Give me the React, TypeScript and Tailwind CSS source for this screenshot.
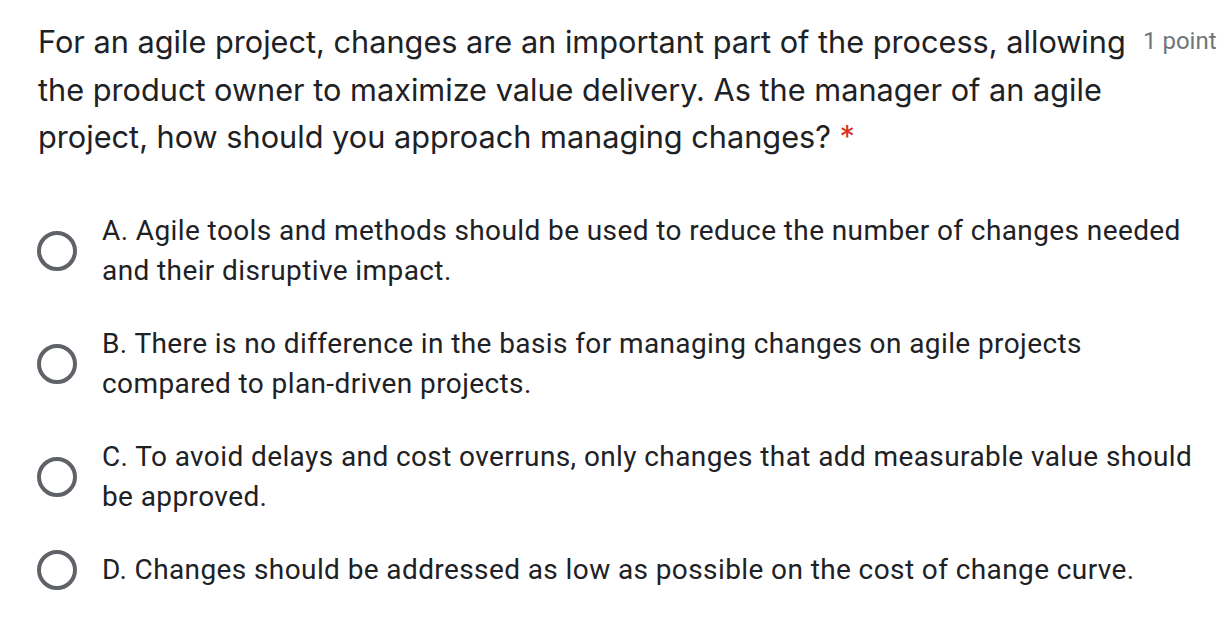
const options = [
  ["A. Agile tools and methods should be used to reduce the number of changes needed", "and their disruptive impact."],
  ["B. There is no difference in the basis for managing changes on agile projects", "compared to plan-driven projects."],
  ["C. To avoid delays and cost overruns, only changes that add measurable value should", "be approved."],
  ["D. Changes should be addressed as low as possible on the cost of change curve."],
];

function Radio() {
  return <div className="w-10 h-10 shrink-0 rounded-full border-[4.5px] border-[#5f6368]" />;
}

export default function App() {
  return (
    <div className="w-[1230px] h-[636px] bg-white pl-[38px] pt-[18px] font-['Roboto',sans-serif] text-[#202124]">
      {/* Question title */}
      <div className="flex items-start">
        <div className="w-[1100px] font-['Inter',sans-serif] text-[30.7px] leading-[47.5px]">
          <div className="whitespace-nowrap">
            For an agile project, changes are an important part of the process, allowing
          </div>
          <div className="whitespace-nowrap">
            the product owner to maximize value delivery. As the manager of an agile
          </div>
          <div className="whitespace-nowrap">
            project, how should you approach managing changes?{" "}
            <span className="text-[#d93025]">*</span>
          </div>
        </div>
        <span className="ml-[5px] text-[24px] leading-[47.5px] text-[#70757a] whitespace-nowrap">1 point</span>
      </div>

      {/* Options */}
      <div className="mt-[50px] flex flex-col gap-[33px]">
        {options.map((lines, i) => (
          <div key={i} className="flex items-center gap-[25px] -ml-[1px]">
            <Radio />
            <div className="text-[28px] leading-[40px] tracking-[0.4px]">
              {lines.map((l, j) => (
                <div key={j} className="whitespace-nowrap">{l}</div>
              ))}
            </div>
          </div>
        ))}
      </div>
    </div>
  );
}
